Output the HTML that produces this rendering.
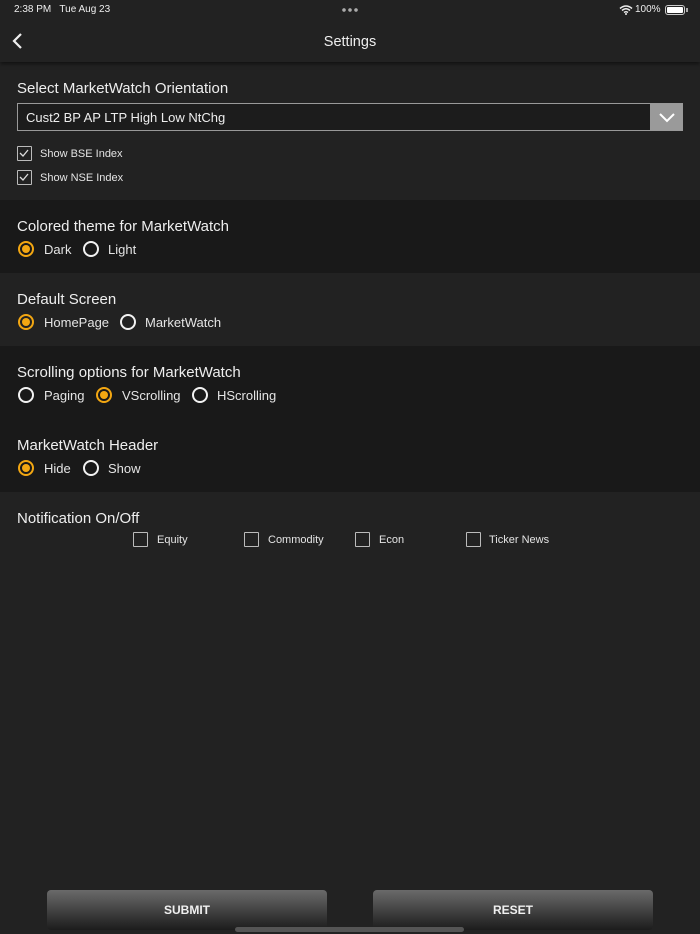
<!DOCTYPE html>
<html><head><meta charset="utf-8"><style>
*{margin:0;padding:0;box-sizing:border-box}
body{width:700px;height:934px;background:#222;position:relative;overflow:hidden;font-family:"Liberation Sans",sans-serif;color:#e8e8e8}
.a{position:absolute}
.sec{position:absolute;left:0;width:700px}
.h{position:absolute;left:17px;font-size:15px;color:#eee}
.t{position:absolute;font-size:13px;color:#e4e4e4}
.r{position:absolute;width:16px;height:16px;border:2px solid #f2f2f2;border-radius:50%}
.r.on{border-color:#f3a712}
.r.on::after{content:"";position:absolute;left:2px;top:2px;width:8px;height:8px;border-radius:50%;background:#f3a712}
.cb{position:absolute;width:15px;height:15px;border:1.5px solid #bbb;border-radius:1px}
.btn{position:absolute;top:890px;width:280px;height:40px;border-radius:4px;background:linear-gradient(#6a6a6a,#1c1c1c);color:#f0f0f0;font-size:12px;font-weight:bold;text-align:center;line-height:40px}
</style></head><body>
<div class="sec" style="top:0;height:62px;background:#222;box-shadow:0 2px 4px rgba(0,0,0,.5);z-index:2"></div>
<div class="a" style="left:14px;top:4px;font-size:10px;color:#eee;z-index:3">2:38 PM&nbsp;&nbsp; Tue Aug 23</div>
<div class="a" style="left:341px;top:8px;z-index:3;width:18px;height:4px;background:radial-gradient(circle,#aaa 1.6px,transparent 2px) 0 0/6px 4px repeat-x"></div>
<svg class="a" style="left:619px;top:5px;z-index:3" width="14" height="10" viewBox="0 0 14 10"><path d="M1 3.5Q7-1.5 13 3.5M3 5.5Q7 2 11 5.5M5 7.5Q7 6 9 7.5" stroke="#eee" stroke-width="1.5" fill="none"/><circle cx="7" cy="9" r="1" fill="#eee"/></svg>
<div class="a" style="left:635px;top:4px;font-size:10px;color:#eee;z-index:3">100%</div>
<div class="a" style="left:665px;top:5px;width:20px;height:10px;border:1px solid #ccc;border-radius:3px;padding:1px;z-index:3"><div style="width:100%;height:100%;background:#fff;border-radius:1px"></div></div>
<div class="a" style="left:686px;top:8px;width:1.5px;height:4px;background:#aaa;z-index:3"></div>
<svg class="a" style="left:11px;top:32px;z-index:3" width="14" height="18" viewBox="0 0 14 18"><path d="M10 2L3 9l7 7" stroke="#eee" stroke-width="2.2" fill="none"/></svg>
<div class="a" style="left:0;width:700px;top:34px;text-align:center;font-size:14.5px;color:#eee;z-index:3">Settings</div>

<div class="sec" style="top:62px;height:138px;background:#222"></div>
<div class="h" style="top:80px">Select MarketWatch Orientation</div>
<div class="a" style="left:17px;top:103px;width:666px;height:28px;border:1px solid #999;background:#1c1c1c"></div>
<div class="a" style="left:26px;top:110px;font-size:13px;color:#eee">Cust2 BP AP LTP High Low NtChg</div>
<div class="a" style="left:650px;top:104px;width:32px;height:26px;background:#9a9a9a"></div>
<svg class="a" style="left:658px;top:110px" width="18" height="14" viewBox="0 0 18 14"><path d="M2 4l7 7 7-7" stroke="#fff" stroke-width="2" fill="none"/></svg>
<div class="cb" style="left:17px;top:146px"><svg width="12" height="12" viewBox="0 0 12 12" style="position:absolute;left:0;top:0"><path d="M2 6l3 3 5-6" stroke="#ddd" stroke-width="1.3" fill="none"/></svg></div>
<div class="t" style="left:40px;top:148px;font-size:11px">Show BSE Index</div>
<div class="cb" style="left:17px;top:170px"><svg width="12" height="12" viewBox="0 0 12 12" style="position:absolute;left:0;top:0"><path d="M2 6l3 3 5-6" stroke="#ddd" stroke-width="1.3" fill="none"/></svg></div>
<div class="t" style="left:40px;top:172px;font-size:11px">Show NSE Index</div>

<div class="sec" style="top:200px;height:73px;background:#191919"></div>
<div class="h" style="top:218px">Colored theme for MarketWatch</div>
<div class="r on" style="left:18px;top:241px"></div><div class="t" style="left:44px;top:242px">Dark</div>
<div class="r" style="left:83px;top:241px"></div><div class="t" style="left:108px;top:242px">Light</div>

<div class="sec" style="top:273px;height:73px;background:#222"></div>
<div class="h" style="top:291px">Default Screen</div>
<div class="r on" style="left:18px;top:314px"></div><div class="t" style="left:44px;top:315px">HomePage</div>
<div class="r" style="left:120px;top:314px"></div><div class="t" style="left:145px;top:315px">MarketWatch</div>

<div class="sec" style="top:346px;height:146px;background:#191919"></div>
<div class="h" style="top:364px">Scrolling options for MarketWatch</div>
<div class="r" style="left:18px;top:387px"></div><div class="t" style="left:44px;top:388px">Paging</div>
<div class="r on" style="left:96px;top:387px"></div><div class="t" style="left:122px;top:388px">VScrolling</div>
<div class="r" style="left:192px;top:387px"></div><div class="t" style="left:217px;top:388px">HScrolling</div>
<div class="h" style="top:437px">MarketWatch Header</div>
<div class="r on" style="left:18px;top:460px"></div><div class="t" style="left:44px;top:461px">Hide</div>
<div class="r" style="left:83px;top:460px"></div><div class="t" style="left:108px;top:461px">Show</div>

<div class="h" style="top:510px">Notification On/Off</div>
<div class="cb" style="left:133px;top:532px"></div><div class="t" style="left:157px;top:534px;font-size:11px">Equity</div>
<div class="cb" style="left:244px;top:532px"></div><div class="t" style="left:268px;top:534px;font-size:11px">Commodity</div>
<div class="cb" style="left:355px;top:532px"></div><div class="t" style="left:379px;top:534px;font-size:11px">Econ</div>
<div class="cb" style="left:466px;top:532px"></div><div class="t" style="left:489px;top:534px;font-size:11px">Ticker News</div>

<div class="btn" style="left:47px">SUBMIT</div>
<div class="btn" style="left:373px">RESET</div>
<div class="a" style="left:235px;top:927px;width:229px;height:5px;border-radius:3px;background:#555"></div>
</body></html>
